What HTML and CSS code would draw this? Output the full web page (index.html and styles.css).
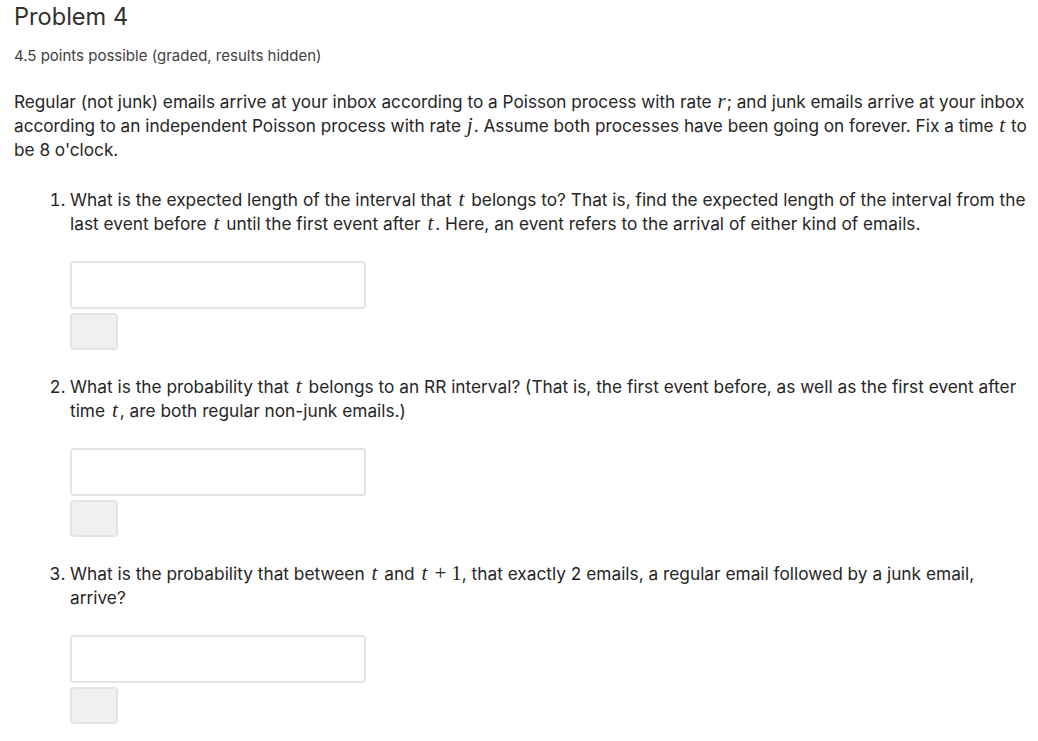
FILE: index.html
```html
<!DOCTYPE html>
<html>
<head>
<meta charset="utf-8">
<link rel="stylesheet" href="styles.css">
</head>
<body>
<div class="problem">
  <h3 class="title">Problem 4</h3>
  <div class="points">4.5 points possible (graded, results hidden)</div>
  <p class="intro">Regular (not junk) emails arrive at your inbox according to a Poisson process with rate <span class="m">r</span>; and junk emails arrive at your inbox according to an independent Poisson process with rate <span class="m">j</span>. Assume both processes have been going on forever. Fix a time <span class="m">t</span> to be 8 o'clock.</p>
  <ol class="questions">
    <li class="q">
      <div class="qtext">What is the expected length of the interval that <span class="m">t</span> belongs to? That is, find the expected length of the interval from the last event before <span class="m">t</span> until the first event after <span class="m">t</span>. Here, an event refers to the arrival of either kind of emails.</div>
      <div class="answer"><div class="input"></div><div class="btn"></div></div>
    </li>
    <li class="q">
      <div class="qtext">What is the probability that <span class="m">t</span> belongs to an RR interval? (That is, the first event before, as well as the first event after time <span class="m">t</span>, are both regular non-junk emails.)</div>
      <div class="answer"><div class="input"></div><div class="btn"></div></div>
    </li>
    <li class="q">
      <div class="qtext">What is the probability that between <span class="m">t</span> and <span class="m">t</span><span class="mo">+</span><span class="mn">1</span>, that exactly 2 emails, a regular email followed by a junk email, arrive?</div>
      <div class="answer"><div class="input"></div><div class="btn"></div></div>
    </li>
  </ol>
</div>
</body>
</html>
```
FILE: styles.css
```css
html, body {
  margin: 0;
  padding: 0;
  background: #fff;
  overflow: hidden;
}
body {
  font-family: Inter, "Open Sans", sans-serif;
  color: #262626;
}
.problem {
  padding: 3px 5px 0 14px;
}
.title {
  margin: 0;
  font-size: 23.6px;
  font-weight: 400;
  line-height: 28px;
  color: #313131;
}
.points {
  margin-top: 15px;
  font-size: 15px;
  line-height: 20px;
  color: #414141;
}
.intro {
  margin: 24px 0 0 0;
  font-size: 17.2px;
  line-height: 24px;
}
.m {
  font-family: "Liberation Serif", "DejaVu Serif", serif;
  font-style: italic;
  font-size: 21px;
  line-height: 1;
  padding: 0 2px;
}
.intro .m {
  padding: 0 1px;
}
.mo, .mn {
  font-family: "Liberation Serif", "DejaVu Serif", serif;
  font-size: 21px;
  line-height: 1;
}
.mo {
  padding: 0 5px;
}
.questions {
  margin: 26px 0 0 0;
  padding-left: 56px;
  font-size: 17.3px;
  line-height: 24px;
}
.q {
  margin-bottom: 25px;
}
.q:last-child {
  margin-bottom: 0;
}
.answer {
  display: flex;
  flex-direction: column;
  gap: 4px;
  margin-top: 25px;
}
.input {
  width: 292px;
  height: 44px;
  border: 2px solid #e4e4e4;
  border-radius: 4px;
  background: #fff;
}
.btn {
  width: 44px;
  height: 33px;
  border: 2px solid #e4e4e4;
  border-radius: 4px;
  background: #f0f0f0;
}
```
